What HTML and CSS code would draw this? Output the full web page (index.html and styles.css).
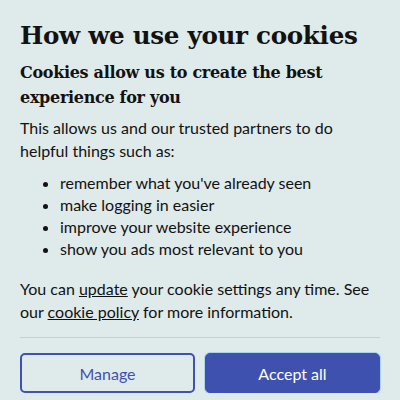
FILE: index.html
```html
<!DOCTYPE html>
<html>
<head>
<meta charset="utf-8">
<link rel="stylesheet" href="styles.css">
</head>
<body>
<div class="banner">
  <h1 class="title">How we use your cookies</h1>
  <h2 class="subtitle">Cookies allow us to create the best experience for you</h2>
  <p class="text">This allows us and our trusted partners to do helpful things such as:</p>
  <ul class="list">
    <li>remember what you've already seen</li>
    <li>make logging in easier</li>
    <li>improve your website experience</li>
    <li>show you ads most relevant to you</li>
  </ul>
  <p class="text note">You can <a class="link" href="#">update</a> your cookie settings any time. See our <a class="link" href="#">cookie policy</a> for more information.</p>
  <div class="actions">
    <button class="btn btn-outline">Manage</button>
    <button class="btn btn-primary">Accept all</button>
  </div>
</div>
</body>
</html>
```
FILE: styles.css
```css
html, body {
  margin: 0;
  padding: 0;
  background: #dfeaea;
}
.banner {
  padding: 18px 20px 0 20px;
  color: #121212;
  font-family: Lato, "Open Sans", sans-serif;
}
.title {
  margin: 0;
  font-family: "DejaVu Serif", serif;
  font-weight: 700;
  font-size: 24.6px;
  line-height: 36px;
  letter-spacing: -0.3px;
}
.subtitle {
  margin: 6px 0 0 0;
  font-family: "DejaVu Serif", serif;
  font-weight: 700;
  font-size: 16px;
  line-height: 25px;
  letter-spacing: -0.3px;
}
.text {
  margin: 6px 0 0 0;
  font-size: 16px;
  line-height: 23px;
}
.list {
  margin: 10px 0 0 0;
  padding-left: 40px;
  font-size: 16px;
  line-height: 22px;
}
.note {
  margin-top: 17px;
}
.link {
  color: #121212;
  text-decoration: underline;
}
.actions {
  margin-top: 14px;
  border-top: 1px solid #c6d0d0;
  padding-top: 15px;
  display: flex;
  gap: 10px;
}
.btn {
  height: 40px;
  border-radius: 5px;
  font-family: Lato, sans-serif;
  font-size: 16px;
  cursor: pointer;
}
.btn-outline {
  width: 175px;
  background: transparent;
  border: 2px solid #3f51b5;
  color: #3f51b5;
}
.btn-primary {
  flex: 1;
  background: #3f51ae;
  border: 1px solid #3f51ae;
  box-shadow: 0 0 0 1px #a9d3f0;
  color: #ffffff;
}
```
